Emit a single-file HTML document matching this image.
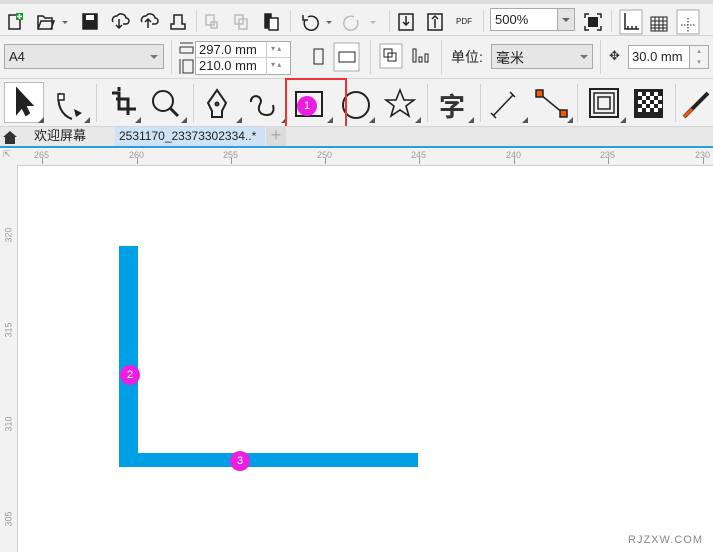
<!DOCTYPE html>
<html><head><meta charset="utf-8"><style>
*{margin:0;padding:0;box-sizing:border-box}
body{width:713px;height:552px;overflow:hidden;background:#f2f2f2;font-family:"Liberation Sans","Noto Sans CJK SC",sans-serif;position:relative;font-size:12px;color:#222}
.a{position:absolute}
.hl{position:absolute;height:1px;background:#d4d4d4}
.vs{position:absolute;width:1px;background:#d0d0d0}
.box{position:absolute;background:#fff;border:1px solid #aaa}
.rn{position:absolute;font-size:9px;color:#999}
.tk{position:absolute;background:#999}
.tri{position:absolute;width:0;height:0;border-left:3px solid transparent;border-top:3px solid transparent;border-right:3px solid #555;border-bottom:3px solid #555}
.dot{position:absolute;width:20px;height:20px;border-radius:50%;background:#ec1ee0;color:#fff;font-size:11px;text-align:center;line-height:20px}
</style></head><body>
<div class="a" style="left:0;top:0;width:713px;height:4px;background:#dcdcdc"></div>
<!-- row1 -->
<svg class="a" style="left:0;top:4px" width="713" height="32" fill="none" stroke="#222" stroke-width="1.5">
<rect x="9" y="11" width="11" height="14"/><rect x="16" y="9" width="7" height="7" fill="#1a9c2a" stroke="none"/><path d="M19.5 10v5M17 12.5h5" stroke="#fff" stroke-width="1.5"/>
<path d="M38 25V12h5l2 2h7v11z M38 25l3-8h13l-3 8" fill="none"/><path d="M62 17l3 3 3-3" fill="#666" stroke="none"/>
<rect x="83" y="10" width="14" height="15" fill="#222"/><rect x="86" y="11" width="8" height="5" fill="#fff" stroke="none"/>
<path d="M113 18a4 4 0 0 1 4-6a5 5 0 0 1 9 2a3 3 0 0 1 0 6h-3M119 15v9M116 21l3 3 3-3"/>
<path d="M142 18a4 4 0 0 1 4-6a5 5 0 0 1 9 2a3 3 0 0 1 0 6h-3M148 24v-9M145 18l3-3 3 3"/>
<path d="M171 25h14v-5h-3v-9h-8v9h-3z"/>
<g stroke="#bbb"><rect x="206" y="11" width="8" height="10"/><rect x="211" y="18" width="6" height="6"/><rect x="235" y="11" width="8" height="9"/><rect x="239" y="15" width="8" height="10"/></g>
<rect x="265" y="10" width="6" height="14" fill="#222"/><rect x="269" y="14" width="9" height="12" fill="#fff"/>
<path d="M305 16a7 7 0 1 0 3-3M303 11v5h5"/><path d="M326 17l3 3 3-3" fill="#666" stroke="none"/>
<path d="M357 16a7 7 0 1 1-3-3" stroke="#bbb"/><path d="M370 17l3 3 3-3" fill="#bbb" stroke="none"/>
<rect x="399" y="10" width="14" height="16"/><path d="M406 12v9M403 18l3 3 3-3"/>
<rect x="428" y="10" width="14" height="16"/><path d="M435 24v-9M432 15l3-3 3 3"/>
<text x="456" y="20" font-size="8" fill="#222" stroke="none" font-family="Liberation Sans">PDF</text>
<path d="M585 14v-4h4M597 10h4v4M601 22v4h-4M589 26h-4v-4"/><rect x="588" y="13" width="10" height="10" fill="#222" stroke="none"/>
<rect x="620" y="6" width="22" height="24" fill="#fff" stroke="#aaa" stroke-width="1"/><path d="M625 9v16h14M628 22v3M632 22v3M636 22v3"/>
<path d="M651 13h16v14h-16zM651 17h16M651 21h16M651 24h16M655 13v14M659 13v14M663 13v14" stroke-width="1"/>
<rect x="677" y="6" width="22" height="24" fill="#fff" stroke="#aaa" stroke-width="1"/><path d="M681 21h14M688 14v14" stroke-dasharray="1.5 1.5" stroke-width="1"/>
</svg>
<div class="vs" style="left:196px;top:10px;height:22px"></div>
<div class="vs" style="left:290px;top:10px;height:22px"></div>
<div class="vs" style="left:389px;top:10px;height:22px"></div>
<div class="vs" style="left:483px;top:10px;height:22px"></div>
<div class="vs" style="left:611px;top:10px;height:22px"></div>
<div class="box" style="left:490px;top:8px;width:85px;height:23px;padding:3px 0 0 4px;font-size:13px">500%</div>
<div class="a" style="left:557px;top:9px;width:17px;height:21px;background:#e4e4e4;border-left:1px solid #aaa"></div>
<div class="a" style="left:562px;top:18px;border:4px solid transparent;border-top:4px solid #666"></div>
<div class="hl" style="left:0;top:35px;width:713px"></div>
<!-- row2 -->
<div class="a" style="left:4px;top:44px;width:160px;height:25px;background:#e6e6e6;border:1px solid #aaa;padding:4px 0 0 4px;font-size:13px">A4</div>
<div class="a" style="left:150px;top:55px;border:4px solid transparent;border-top:4px solid #777"></div>
<div class="vs" style="left:171px;top:40px;height:34px"></div>
<svg class="a" style="left:178px;top:40px" width="20" height="36" fill="none" stroke="#333"><rect x="2" y="7" width="13" height="6"/><path d="M2 3h13"/><rect x="5" y="20" width="10" height="13"/><path d="M2 19v15"/></svg>
<div class="box" style="left:195px;top:41px;width:96px;height:34px"></div>
<div class="a" style="left:199px;top:42px;font-size:13px">297.0 mm</div>
<div class="a" style="left:199px;top:58px;font-size:13px">210.0 mm</div>
<div class="hl" style="left:196px;top:57px;width:94px;background:#ccc"></div>
<div class="a" style="left:266px;top:41px;width:25px;height:34px;border-left:1px solid #ccc;color:#888;font-size:8px;line-height:16px;padding-left:4px">▾ ▴<br>▾ ▴</div>
<svg class="a" style="left:300px;top:40px" width="70" height="36" fill="none" stroke="#222"><rect x="14" y="9" width="9" height="15"/><rect x="34" y="3" width="25" height="28" fill="#fff" stroke="#aaa"/><rect x="39" y="12" width="16" height="10"/></svg>
<div class="vs" style="left:370px;top:40px;height:34px"></div>
<svg class="a" style="left:378px;top:40px" width="60" height="36" fill="none" stroke="#222"><rect x="2" y="4" width="22" height="24" fill="#fff" stroke="#aaa"/><rect x="6" y="9" width="8" height="8"/><rect x="10" y="13" width="8" height="8"/><path d="M35 9v13h3V9zM41 17v5h3v-5zM47 14v8h3v-8z"/></svg>
<div class="vs" style="left:441px;top:40px;height:34px"></div>
<div class="a" style="left:451px;top:47px;font-size:14px">单位:</div>
<div class="a" style="left:491px;top:44px;width:102px;height:25px;background:#e6e6e6;border:1px solid #aaa;padding:3px 0 0 4px;font-size:14px">毫米</div>
<div class="a" style="left:580px;top:55px;border:4px solid transparent;border-top:4px solid #777"></div>
<div class="vs" style="left:600px;top:40px;height:34px"></div>
<div class="a" style="left:609px;top:48px;font-size:13px;color:#333">✥</div>
<div class="box" style="left:628px;top:45px;width:62px;height:24px;padding:3px 0 0 3px;font-size:13px">30.0 mm</div>
<div class="a" style="left:690px;top:45px;width:19px;height:24px;border:1px solid #aaa;border-left:none;color:#888;font-size:7px;line-height:11px;text-align:center">▴<br>▾</div>
<div class="hl" style="left:0;top:78px;width:713px"></div>
<!-- row3 tools -->
<div class="a" style="left:4px;top:82px;width:40px;height:41px;background:#fff;border:1px solid #bbb"></div>
<svg class="a" style="left:0;top:79px" width="713" height="48" fill="none" stroke="#222" stroke-width="2">
<path d="M17 10v24l5-6 4 8 3-2-4-8h7z" fill="#222"/>
<path d="M60 14a20 20 0 0 0 12 26" /><rect x="58" y="15" width="6" height="6" fill="#fff" stroke-width="1.5"/><path d="M74 30l8 4-6 4z" fill="#222" stroke="none"/>
<path d="M112 14h7v16h17M119 12v-4M116 20h12v16" stroke-width="3"/>
<circle cx="163" cy="22" r="10"/><path d="M170 29l8 8" stroke-width="3"/>
<path d="M212 38h10v-6l4-8-9-13-9 13 4 8z" /><circle cx="217" cy="25" r="1.5"/>
<path d="M251 23a5 5 0 1 1 9 2c-3 6 0 11 7 11s7-6 6-10"/>
<rect x="296" y="13" width="26" height="24"/>
<circle cx="356" cy="26" r="13"/>
<path d="M400 11l4 10h10l-8 6 3 10-9-6-9 6 3-10-8-6h10z" stroke-width="1.6"/>
<text x="439" y="37" font-size="26" font-weight="bold" fill="#333" stroke="none" font-family="Noto Sans CJK SC">字</text>
<path d="M493 37l20-21M491 34l5 5M510 13l5 5" stroke-width="1.5"/>
<path d="M541 16l22 18" stroke-width="1.5"/><rect x="536" y="11" width="7" height="7" fill="#f05a00" stroke="#222" stroke-width="1.5"/><rect x="560" y="31" width="7" height="7" fill="#f05a00" stroke="#222" stroke-width="1.5"/>
<rect x="590" y="10" width="28" height="28" stroke-width="2"/><rect x="594" y="14" width="20" height="20" stroke-width="1.5"/><rect x="598" y="18" width="12" height="12" stroke-width="1.5"/>
<rect x="634" y="10" width="29" height="29" fill="#222" stroke="none"/>
<g fill="#fff" stroke="none"><rect x="638" y="13" width="4" height="4"/><rect x="646" y="13" width="4" height="4"/><rect x="654" y="13" width="4" height="4"/><rect x="642" y="17" width="4" height="4"/><rect x="650" y="17" width="4" height="4"/><rect x="658" y="17" width="4" height="4"/><rect x="638" y="21" width="4" height="4"/><rect x="646" y="21" width="4" height="4"/><rect x="654" y="21" width="4" height="4"/><rect x="642" y="25" width="4" height="4"/><rect x="650" y="25" width="4" height="4"/><rect x="658" y="25" width="4" height="4"/><rect x="638" y="29" width="4" height="4"/><rect x="646" y="29" width="4" height="4"/><rect x="654" y="29" width="4" height="4"/></g>
<path d="M684 38l16-16M700 22l8-8" stroke-width="4"/><path d="M684 38l8-8" stroke="#f05a00" stroke-width="3"/>
</svg>
<div class="tri" style="left:38px;top:117px"></div><div class="tri" style="left:84px;top:117px"></div><div class="tri" style="left:135px;top:117px"></div><div class="tri" style="left:181px;top:117px"></div><div class="tri" style="left:236px;top:117px"></div><div class="tri" style="left:281px;top:117px"></div><div class="tri" style="left:327px;top:117px"></div><div class="tri" style="left:369px;top:117px"></div><div class="tri" style="left:415px;top:117px"></div><div class="tri" style="left:468px;top:117px"></div><div class="tri" style="left:522px;top:117px"></div><div class="tri" style="left:567px;top:117px"></div><div class="tri" style="left:620px;top:117px"></div>
<div class="vs" style="left:96px;top:84px;height:38px"></div><div class="vs" style="left:193px;top:84px;height:38px"></div><div class="vs" style="left:427px;top:84px;height:38px"></div><div class="vs" style="left:480px;top:84px;height:38px"></div><div class="vs" style="left:577px;top:84px;height:38px"></div><div class="vs" style="left:675px;top:84px;height:38px"></div>
<div class="a" style="left:285px;top:78px;width:62px;height:55px;border:2px solid #ee3333"></div>
<div class="dot" style="left:297px;top:96px">1</div>
<div class="hl" style="left:0;top:126px;width:713px"></div>
<!-- tabs -->
<div class="a" style="left:0;top:127px;width:713px;height:19px;background:#e8e8e8"></div>
<svg class="a" style="left:2px;top:130px" width="16" height="14"><path d="M1 7l7-6 7 6h-2v7H3V7z" fill="#333"/></svg>
<div class="a" style="left:34px;top:127px;font-size:13px;line-height:18px">欢迎屏幕</div>
<div class="a" style="left:115px;top:127px;width:150px;height:19px;background:#cfe3f7;font-size:12px;padding:2px 0 0 4px">2531170_23373302334..*</div>
<div class="a" style="left:266px;top:126px;width:20px;height:20px;background:#dcdcdc;color:#aaa;font-size:18px;text-align:center;line-height:19px">+</div>
<div class="a" style="left:0;top:146px;width:713px;height:2px;background:#2d9be0"></div>
<!-- rulers -->
<div class="a" style="left:0;top:148px;width:713px;height:17px;background:#f2f2f2"></div>
<div class="a" style="left:0;top:165px;width:17px;height:387px;background:#f2f2f2"></div>
<div class="a" style="left:17px;top:165px;width:696px;height:387px;background:#fff;border-left:1px solid #ccc;border-top:1px solid #ccc"></div>
<div class="rn" style="left:34px;top:150px">265</div><div class="rn" style="left:129px;top:150px">260</div><div class="rn" style="left:223px;top:150px">255</div><div class="rn" style="left:317px;top:150px">250</div><div class="rn" style="left:411px;top:150px">245</div><div class="rn" style="left:506px;top:150px">240</div><div class="rn" style="left:600px;top:150px">235</div><div class="rn" style="left:695px;top:150px">230</div>
<div class="tk" style="left:42px;top:158px;width:1px;height:6px"></div><div class="tk" style="left:137px;top:158px;width:1px;height:6px"></div><div class="tk" style="left:231px;top:158px;width:1px;height:6px"></div><div class="tk" style="left:325px;top:158px;width:1px;height:6px"></div><div class="tk" style="left:419px;top:158px;width:1px;height:6px"></div><div class="tk" style="left:514px;top:158px;width:1px;height:6px"></div><div class="tk" style="left:608px;top:158px;width:1px;height:6px"></div><div class="tk" style="left:703px;top:158px;width:1px;height:6px"></div>
<div class="rn" style="left:1px;top:230px;transform:rotate(-90deg)">320</div><div class="rn" style="left:1px;top:325px;transform:rotate(-90deg)">315</div><div class="rn" style="left:1px;top:419px;transform:rotate(-90deg)">310</div><div class="rn" style="left:1px;top:514px;transform:rotate(-90deg)">305</div>
<div class="a" style="left:3px;top:149px;font-size:9px;color:#999">⇱</div>
<!-- L shape -->
<div class="a" style="left:119px;top:246px;width:19px;height:221px;background:#00a0e6"></div>
<div class="a" style="left:119px;top:453px;width:299px;height:14px;background:#00a0e6"></div>
<div class="dot" style="left:120px;top:365px">2</div>
<div class="dot" style="left:230px;top:451px">3</div>
<div class="a" style="left:628px;top:534px;font-size:11px;color:#888;letter-spacing:1px">RJZXW.COM</div>
</body></html>
